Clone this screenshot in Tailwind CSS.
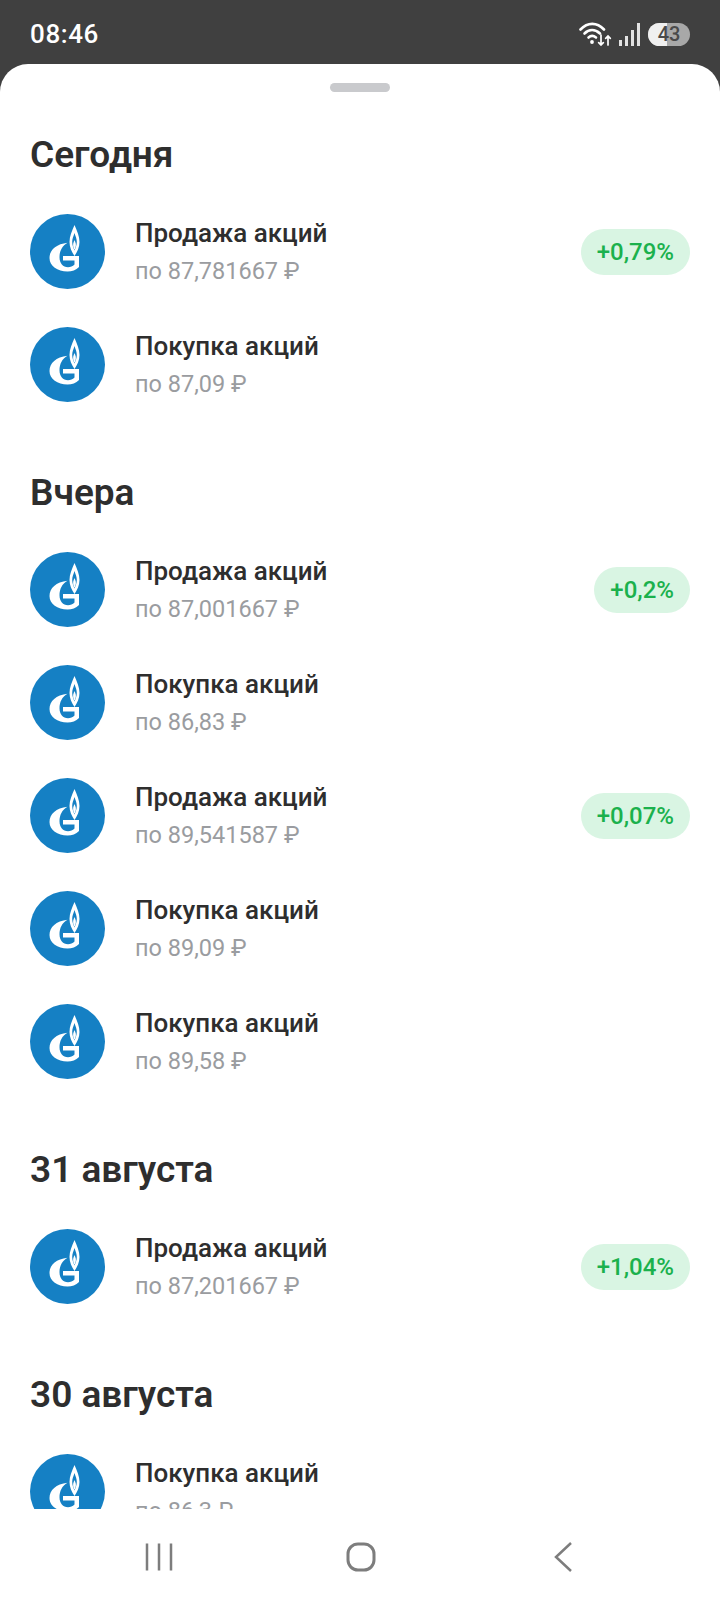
<!DOCTYPE html>
<html>
  <head>
    <title>Сделки</title>
    <meta charset="UTF-8" />
    <script src="https://cdn.jsdelivr.net/npm/@tailwindcss/browser@4"></script>
  </head>

  <body class="h-[1600px] w-[720px] overflow-hidden bg-[#404040] font-['Roboto',sans-serif]">
    <svg class="hidden">
      <symbol id="gp" viewBox="0 0 75 75">
        <circle cx="37.5" cy="37.5" r="37.5" fill="#1580c4" />
        <path fill="#fff" fill-rule="evenodd" d="M44.500 11c-2.700 6-5 11.500-5 17 0 5 2.200 10 5 14 2.800-4 5-9 5-14 0-5.500-2.300-11-5-17zM44.500 19c-1.100 3.300-2.300 6-2.300 9 0 3.300 1.200 6 2.300 8.500 1.100-2.500 2.300-5.200 2.300-8.500 0-3-1.200-5.700-2.300-9z" />
        <path fill="#fff" d="M44.500 26c-.9 2-1.400 3.500-1.400 5 0 1.800.7 3.400 1.400 4.800.7-1.400 1.400-3 1.400-4.800 0-1.500-.5-3-1.400-5z" />
        <path fill="#fff" d="M37.500 28.700C26 30 19.500 36 19.500 44c0 8 8 13.500 18 13.500 4.500 0 8.500-1.500 11.500-4.500V42H33v4.500h11.500v4c-1.800 1.700-4 2.700-6.500 2.700-5 0-8.500-4-8.500-10 0-6 2.500-11.500 8-14.500z" />
      </symbol>
    </svg>

    <!-- статус бар -->
    <div class="flex h-16 items-center justify-between px-[30px] pt-[4px] text-white">
      <span class="text-[26px] font-medium tracking-[0.6px]">08:46</span>
      <div class="flex items-center">
        <svg width="34" height="24" viewBox="0 0 34 24" fill="none" stroke="#fff" stroke-linecap="round">
          <path stroke-width="2.600" d="M1.500 7.500C8.500 0 18 0 25 7.500" />
          <path stroke-width="2.600" d="M5.500 11.500c4.500-4.500 10.500-4.500 15.500 0" />
          <path stroke-width="2.600" d="M9.500 15.500c2.500-2.200 4.800-2.200 7.500 0" />
          <circle cx="13" cy="20" r="1.900" fill="#fff" stroke="none" />
          <path stroke-width="1.700" d="M22 13v10m-2.300-2.300L22 23l2.300-2.300M29 23v-9m-2.300 2.300L29 14l2.300 2.300" />
        </svg>
        <div class="ml-[6px] flex h-[23px] items-end gap-[3px]">
          <div class="h-[6px] w-[3px] bg-white/85"></div>
          <div class="h-[10px] w-[3px] bg-white/85"></div>
          <div class="h-[16px] w-[3px] bg-white/85"></div>
          <div class="h-[23px] w-[3px] bg-white/85"></div>
        </div>
        <div class="relative ml-[8px] flex h-[23px] w-[42px] items-center justify-center overflow-hidden rounded-full bg-[#a8a8a8]">
          <div class="absolute inset-y-0 left-0 w-[19px] bg-[#f0f0f0]"></div>
          <span class="relative text-[20px] font-medium text-[#4a4a4a]">43</span>
        </div>
      </div>
    </div>

    <!-- шторка -->
    <div class="flex h-[1536px] flex-col overflow-hidden rounded-t-[28px] bg-white">
      <div class="h-[1445px] shrink-0 overflow-hidden px-[30px] pt-[19px]">
        <div class="mx-auto h-[9px] w-[60px] rounded-full bg-[#c9cacd]"></div>

        <h2 class="mt-[40px] h-[46px] text-[37px] leading-[46px] font-semibold text-[#2e2e2e]">Сегодня</h2>
        <div class="mt-[36px] flex flex-col gap-[38px]">
          <div class="flex h-[75px] items-center">
            <svg class="h-[75px] w-[75px] shrink-0"><use href="#gp" /></svg>
            <div class="ml-[30px] flex-1">
              <div class="text-[26px] leading-[38px] font-medium text-[#2e2e2e]">Продажа акций</div>
              <div class="text-[23.500px] leading-[38px] text-[#9a9ca0]">по 87,781667 ₽</div>
            </div>
            <div class="flex h-[46px] items-center rounded-full bg-[#d9f5e3] px-4 text-[24px] font-medium text-[#1bb14d]">+0,79%</div>
          </div>
          <div class="flex h-[75px] items-center">
            <svg class="h-[75px] w-[75px] shrink-0"><use href="#gp" /></svg>
            <div class="ml-[30px] flex-1">
              <div class="text-[26px] leading-[38px] font-medium text-[#2e2e2e]">Покупка акций</div>
              <div class="text-[23.500px] leading-[38px] text-[#9a9ca0]">по 87,09 ₽</div>
            </div>
          </div>
        </div>

        <h2 class="mt-[68px] h-[46px] text-[37px] leading-[46px] font-semibold text-[#2e2e2e]">Вчера</h2>
        <div class="mt-[36px] flex flex-col gap-[38px]">
          <div class="flex h-[75px] items-center">
            <svg class="h-[75px] w-[75px] shrink-0"><use href="#gp" /></svg>
            <div class="ml-[30px] flex-1">
              <div class="text-[26px] leading-[38px] font-medium text-[#2e2e2e]">Продажа акций</div>
              <div class="text-[23.500px] leading-[38px] text-[#9a9ca0]">по 87,001667 ₽</div>
            </div>
            <div class="flex h-[46px] items-center rounded-full bg-[#d9f5e3] px-4 text-[24px] font-medium text-[#1bb14d]">+0,2%</div>
          </div>
          <div class="flex h-[75px] items-center">
            <svg class="h-[75px] w-[75px] shrink-0"><use href="#gp" /></svg>
            <div class="ml-[30px] flex-1">
              <div class="text-[26px] leading-[38px] font-medium text-[#2e2e2e]">Покупка акций</div>
              <div class="text-[23.500px] leading-[38px] text-[#9a9ca0]">по 86,83 ₽</div>
            </div>
          </div>
          <div class="flex h-[75px] items-center">
            <svg class="h-[75px] w-[75px] shrink-0"><use href="#gp" /></svg>
            <div class="ml-[30px] flex-1">
              <div class="text-[26px] leading-[38px] font-medium text-[#2e2e2e]">Продажа акций</div>
              <div class="text-[23.500px] leading-[38px] text-[#9a9ca0]">по 89,541587 ₽</div>
            </div>
            <div class="flex h-[46px] items-center rounded-full bg-[#d9f5e3] px-4 text-[24px] font-medium text-[#1bb14d]">+0,07%</div>
          </div>
          <div class="flex h-[75px] items-center">
            <svg class="h-[75px] w-[75px] shrink-0"><use href="#gp" /></svg>
            <div class="ml-[30px] flex-1">
              <div class="text-[26px] leading-[38px] font-medium text-[#2e2e2e]">Покупка акций</div>
              <div class="text-[23.500px] leading-[38px] text-[#9a9ca0]">по 89,09 ₽</div>
            </div>
          </div>
          <div class="flex h-[75px] items-center">
            <svg class="h-[75px] w-[75px] shrink-0"><use href="#gp" /></svg>
            <div class="ml-[30px] flex-1">
              <div class="text-[26px] leading-[38px] font-medium text-[#2e2e2e]">Покупка акций</div>
              <div class="text-[23.500px] leading-[38px] text-[#9a9ca0]">по 89,58 ₽</div>
            </div>
          </div>
        </div>

        <h2 class="mt-[68px] h-[46px] text-[37px] leading-[46px] font-semibold text-[#2e2e2e]">31 августа</h2>
        <div class="mt-[36px] flex flex-col gap-[38px]">
          <div class="flex h-[75px] items-center">
            <svg class="h-[75px] w-[75px] shrink-0"><use href="#gp" /></svg>
            <div class="ml-[30px] flex-1">
              <div class="text-[26px] leading-[38px] font-medium text-[#2e2e2e]">Продажа акций</div>
              <div class="text-[23.500px] leading-[38px] text-[#9a9ca0]">по 87,201667 ₽</div>
            </div>
            <div class="flex h-[46px] items-center rounded-full bg-[#d9f5e3] px-4 text-[24px] font-medium text-[#1bb14d]">+1,04%</div>
          </div>
        </div>

        <h2 class="mt-[68px] h-[46px] text-[37px] leading-[46px] font-semibold text-[#2e2e2e]">30 августа</h2>
        <div class="mt-[36px] flex flex-col gap-[38px]">
          <div class="flex h-[75px] items-center">
            <svg class="h-[75px] w-[75px] shrink-0"><use href="#gp" /></svg>
            <div class="ml-[30px] flex-1">
              <div class="text-[26px] leading-[38px] font-medium text-[#2e2e2e]">Покупка акций</div>
              <div class="text-[23.500px] leading-[38px] text-[#9a9ca0]">по 86,3 ₽</div>
            </div>
          </div>
        </div>
      </div>

      <!-- навигация -->
      <div class="flex flex-1 items-center justify-between pt-[5px] pr-[145px] pl-[143px]">
        <svg width="32" height="30" viewBox="0 0 32 30" fill="none" stroke="#7d7d7d" stroke-width="2.500">
          <path d="M4 1.500v27M16 1.500v27M28 1.500v27" />
        </svg>
        <svg class="mr-[5px]" width="32" height="30" viewBox="0 0 32 30" fill="none" stroke="#7d7d7d" stroke-width="3">
          <rect x="3" y="2" width="26" height="26" rx="10" />
        </svg>
        <svg width="24" height="32" viewBox="0 0 24 32" fill="none" stroke="#7d7d7d" stroke-width="2.500">
          <path d="M20 2 5 16l15 14" />
        </svg>
      </div>
    </div>
  </body>
</html>
